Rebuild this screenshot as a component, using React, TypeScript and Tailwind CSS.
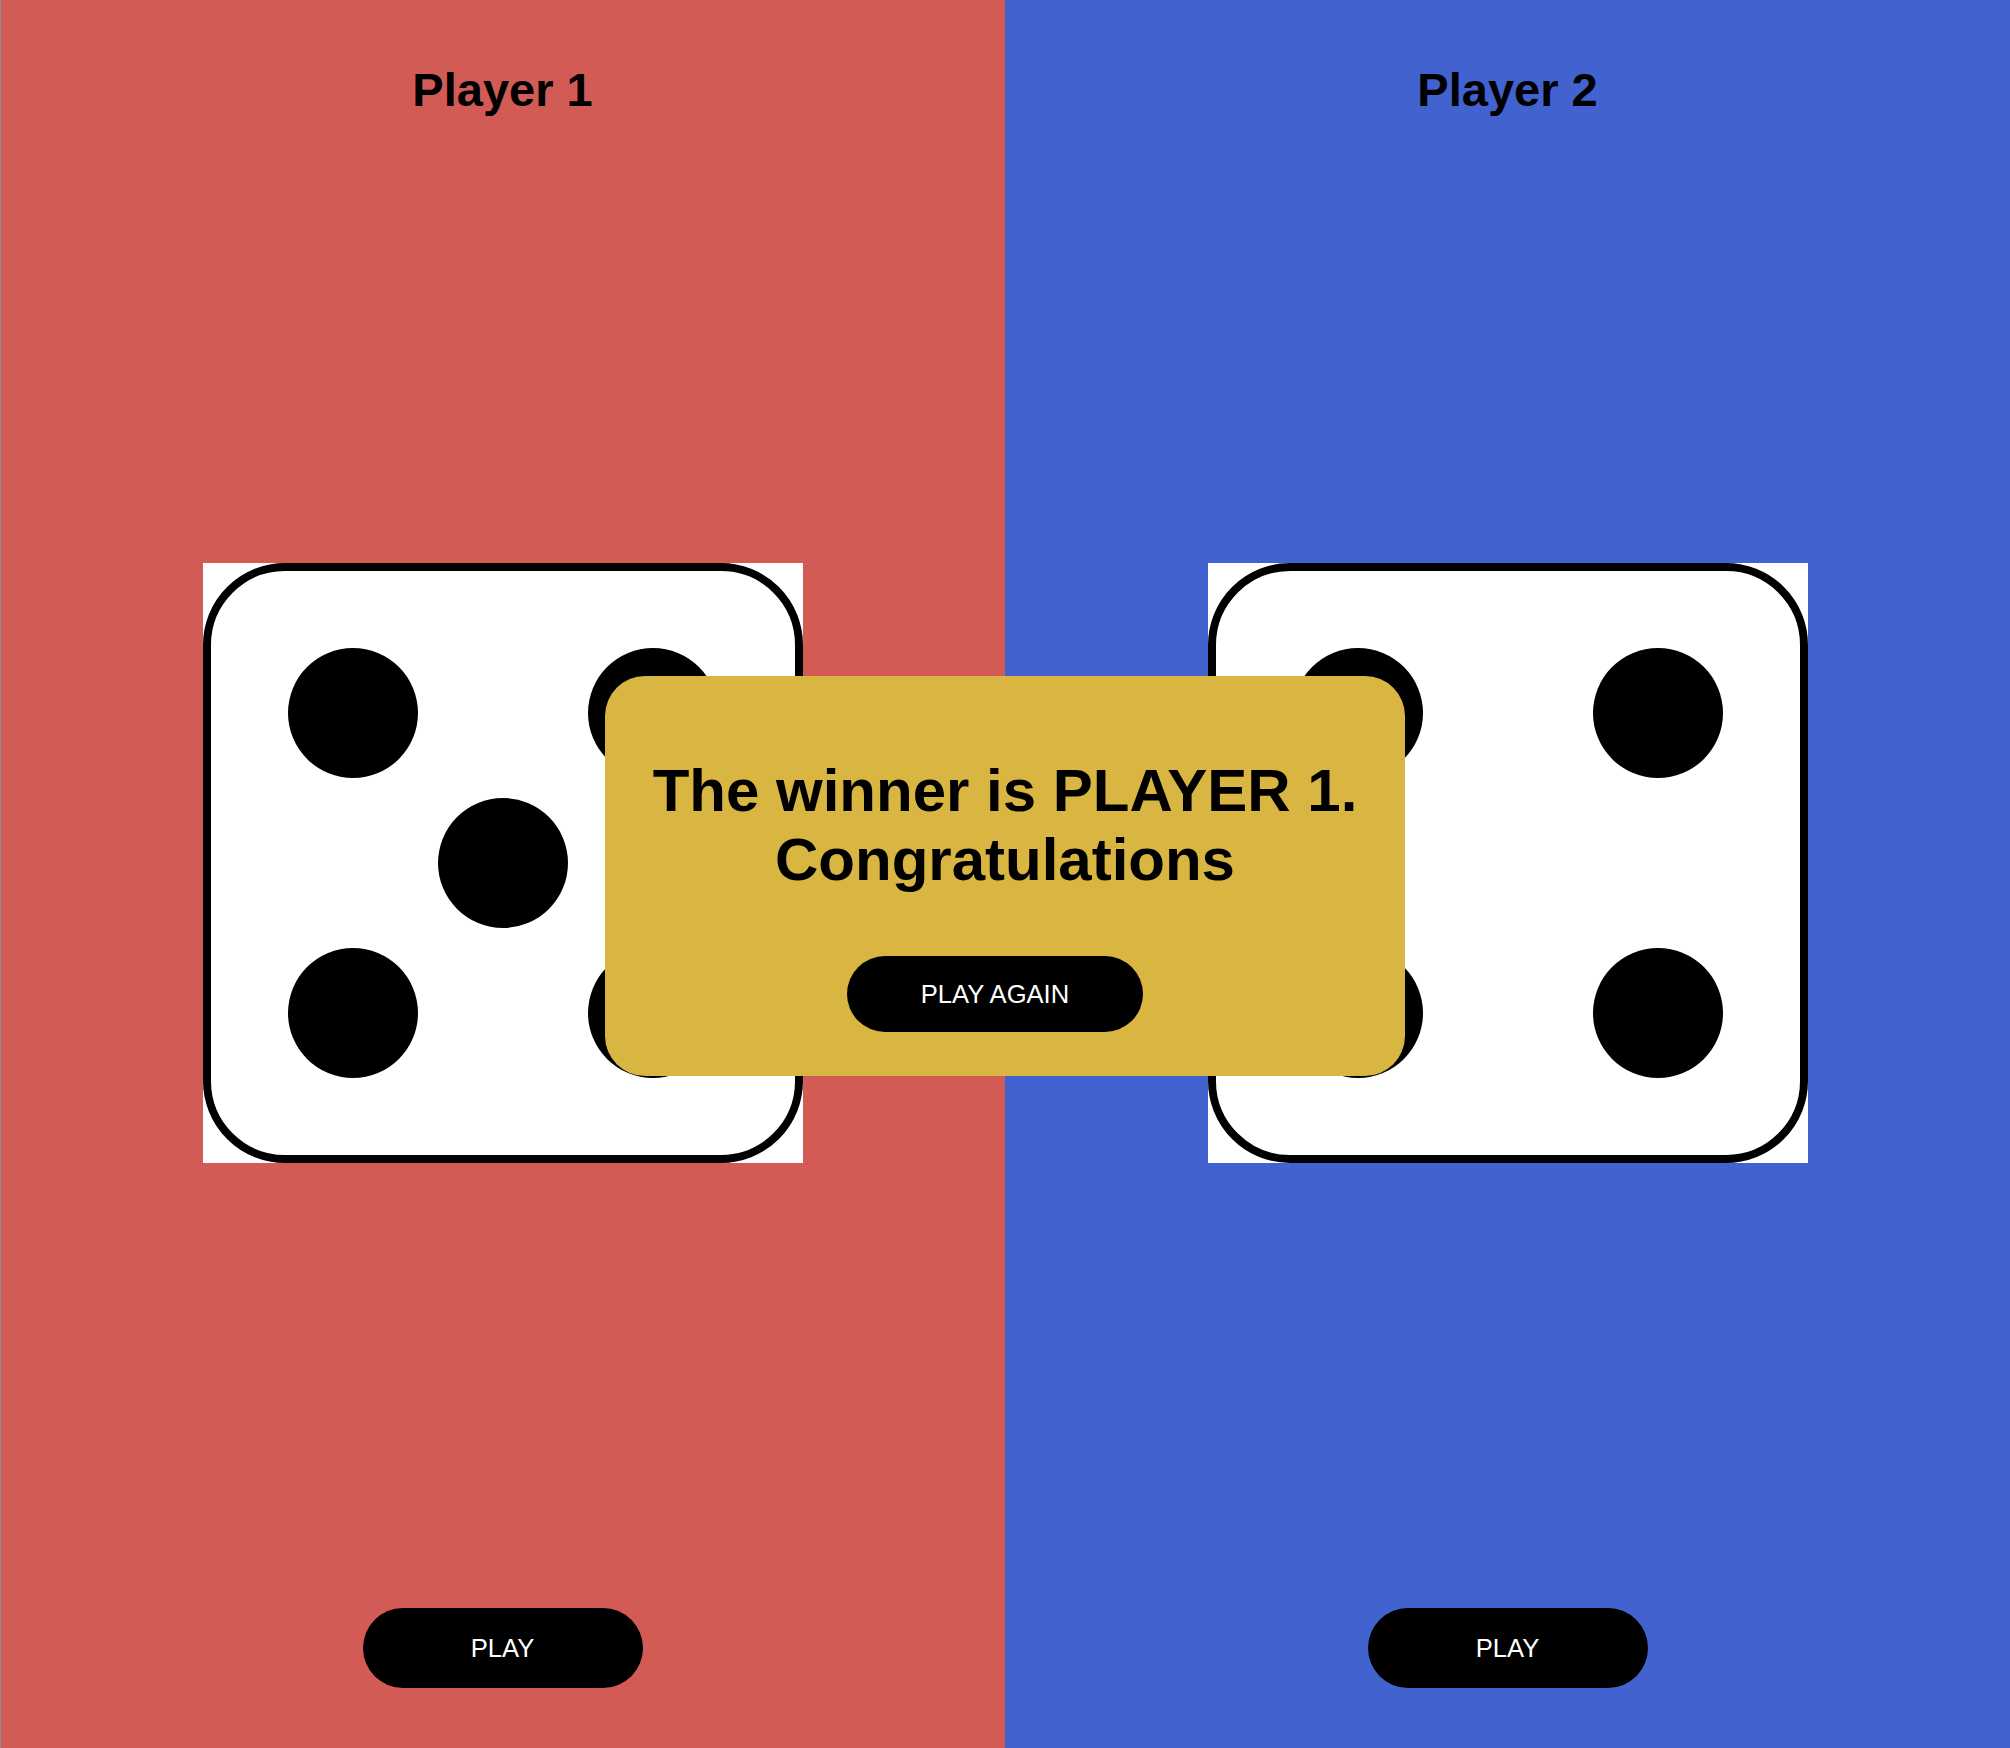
const FACES: Record<number, number[]> = {
  4: [0, 2, 6, 8],
  5: [0, 2, 4, 6, 8],
};

function Die({ value }: { value: number }) {
  const pips = FACES[value];
  return (
    <div className="w-[600px] h-[600px] bg-white">
      <div className="w-full h-full rounded-[82px] border-[8px] border-black p-[67px]">
        <div className="w-full h-full grid grid-cols-3 grid-rows-3">
          {Array.from({ length: 9 }).map((_, i) => (
            <div key={i} className="flex items-center justify-center">
              {pips.includes(i) && (
                <span className="block w-[130px] h-[130px] rounded-full bg-black" />
              )}
            </div>
          ))}
        </div>
      </div>
    </div>
  );
}

function PlayerPanel({ name, value, color }: { name: string; value: number; color: string }) {
  return (
    <div className={`flex-1 flex flex-col items-center justify-between pt-[63px] pb-[60px] ${color}`}>
      <h1 className="text-[47px] font-bold leading-[1.15] text-black">{name}</h1>
      <Die value={value} />
      <button className="w-[280px] h-[80px] rounded-[40px] bg-black text-white text-[25.6px]">
        PLAY
      </button>
    </div>
  );
}

export default function App() {
  return (
    <div className="relative flex h-screen w-full overflow-hidden font-['Liberation_Sans',Arial,sans-serif]">
      <PlayerPanel name="Player 1" value={5} color="bg-[#d25b55] shadow-[inset_1px_0_0_#8a8a8a]" />
      <PlayerPanel name="Player 2" value={4} color="bg-[#4162cf]" />

      <div className="absolute left-[605px] top-[676px] w-[800px] h-[400px] rounded-[40px] bg-[#d8b641] flex flex-col items-center pt-[80px] px-[40px]">
        <p className="text-[60px] font-bold leading-[1.15] text-black text-center">
          The winner is PLAYER 1. Congratulations
        </p>
        <button className="mt-[62px] mr-[20px] w-[296px] h-[76px] rounded-[38px] bg-black text-white text-[25.6px]">
          PLAY AGAIN
        </button>
      </div>
    </div>
  );
}
